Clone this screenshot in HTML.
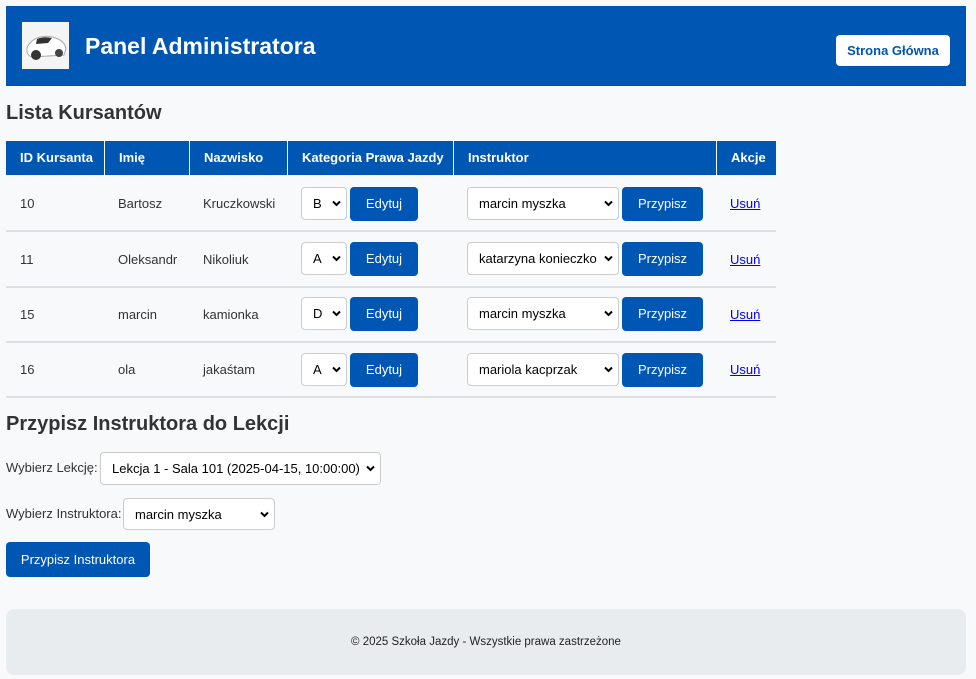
<!DOCTYPE html>
<html><head><meta charset="utf-8"><style>
*{box-sizing:border-box;margin:0;padding:0}
body{width:976px;height:679px;background:#f8f9fa;font-family:"Liberation Sans",Arial,sans-serif;color:#333;position:relative;overflow:hidden}
.a{position:absolute}
.hdr{left:6px;top:6px;width:960px;height:80px;background:#0056b3}
.logo{left:22px;top:22px;width:47px;height:47px;background:#f4f4f4}
.title{left:85px;top:32px;font-size:23px;font-weight:bold;color:#fff;line-height:28px}
.sg{left:836px;top:35px;width:114px;height:31px;background:#fff;border-radius:4px;color:#0056b3;font-weight:bold;font-size:13px;text-align:center;line-height:31px}
h2{position:absolute;font-size:20px;font-weight:bold;color:#333;line-height:24px}
.th{top:141px;height:34px;background:#0056b3;color:#fff;font-weight:bold;font-size:13px;line-height:34px;padding-left:14px}
.td{font-size:13px;line-height:16px}
.sep{height:2px;background:#dde0e3}
.sel{background:#fff;border:1px solid #ccc;border-radius:4px;font-size:13px;color:#000;padding-left:11px;height:33px;line-height:31px}
.sel svg{position:absolute;right:5px;top:12px}
.btn{background:#0056b3;color:#fff;border-radius:4px;font-size:13px;text-align:center;height:34px;line-height:34px}
.lnk{color:#0000ee;text-decoration:underline;font-size:13px}
.lbl{font-size:13px;color:#333}
.foot{left:6px;top:609px;width:960px;height:66px;background:#e9ecef;border-radius:8px;font-size:11.5px;text-align:center;line-height:66px;color:#222}
</style></head><body>
<div class="a hdr"></div>
<div class="a logo"><svg width="47" height="47" viewBox="0 0 47 47"><path d="M5 26 Q8 18 18 15 Q28 13 36 17 Q43 20 44 27 L42 33 L10 35 Q4 33 5 26Z" fill="#fff" stroke="#aaa"/><path d="M15 17 Q22 14 30 16 L26 21 L14 22Z" fill="#333"/><circle cx="14" cy="33" r="5" fill="#333"/><circle cx="37" cy="31" r="4" fill="#444"/></svg></div>
<div class="a title">Panel Administratora</div>
<div class="a sg">Strona Główna</div>

<h2 style="left:6px;top:101px">Lista Kursantów</h2>

<div class="a th" style="left:6px;width:98px">ID Kursanta</div>
<div class="a th" style="left:105px;width:84px">Imię</div>
<div class="a th" style="left:190px;width:97px">Nazwisko</div>
<div class="a th" style="left:288px;width:165px">Kategoria Prawa Jazdy</div>
<div class="a th" style="left:454px;width:262px">Instruktor</div>
<div class="a th" style="left:717px;width:59px">Akcje</div>

<div class="a td" style="left:20px;top:196px">10</div><div class="a td" style="left:118px;top:196px">Bartosz</div><div class="a td" style="left:203px;top:196px">Kruczkowski</div>
<div class="a sel" style="left:301px;top:187px;width:46px">B<svg width="9" height="7" viewBox="0 0 9 7"><path d="M1 1.5L4.5 5L8 1.5" stroke="#000" stroke-width="2" fill="none"/></svg></div>
<div class="a btn" style="left:350px;top:187px;width:68px">Edytuj</div>
<div class="a sel" style="left:467px;top:187px;width:152px">marcin myszka<svg width="9" height="7" viewBox="0 0 9 7"><path d="M1 1.5L4.5 5L8 1.5" stroke="#000" stroke-width="2" fill="none"/></svg></div>
<div class="a btn" style="left:622px;top:187px;width:81px">Przypisz</div>
<div class="a lnk" style="left:730px;top:196px">Usuń</div>
<div class="a sep" style="left:6px;top:230px;width:770px"></div>

<div class="a td" style="left:20px;top:252px">11</div><div class="a td" style="left:118px;top:252px">Oleksandr</div><div class="a td" style="left:203px;top:252px">Nikoliuk</div>
<div class="a sel" style="left:301px;top:242px;width:46px">A<svg width="9" height="7" viewBox="0 0 9 7"><path d="M1 1.5L4.5 5L8 1.5" stroke="#000" stroke-width="2" fill="none"/></svg></div>
<div class="a btn" style="left:350px;top:242px;width:68px">Edytuj</div>
<div class="a sel" style="left:467px;top:242px;width:152px">katarzyna konieczko<svg width="9" height="7" viewBox="0 0 9 7"><path d="M1 1.5L4.5 5L8 1.5" stroke="#000" stroke-width="2" fill="none"/></svg></div>
<div class="a btn" style="left:622px;top:242px;width:81px">Przypisz</div>
<div class="a lnk" style="left:730px;top:252px">Usuń</div>
<div class="a sep" style="left:6px;top:286px;width:770px"></div>

<div class="a td" style="left:20px;top:307px">15</div><div class="a td" style="left:118px;top:307px">marcin</div><div class="a td" style="left:203px;top:307px">kamionka</div>
<div class="a sel" style="left:301px;top:297px;width:46px">D<svg width="9" height="7" viewBox="0 0 9 7"><path d="M1 1.5L4.5 5L8 1.5" stroke="#000" stroke-width="2" fill="none"/></svg></div>
<div class="a btn" style="left:350px;top:297px;width:68px">Edytuj</div>
<div class="a sel" style="left:467px;top:297px;width:152px">marcin myszka<svg width="9" height="7" viewBox="0 0 9 7"><path d="M1 1.5L4.5 5L8 1.5" stroke="#000" stroke-width="2" fill="none"/></svg></div>
<div class="a btn" style="left:622px;top:297px;width:81px">Przypisz</div>
<div class="a lnk" style="left:730px;top:307px">Usuń</div>
<div class="a sep" style="left:6px;top:341px;width:770px"></div>

<div class="a td" style="left:20px;top:362px">16</div><div class="a td" style="left:118px;top:362px">ola</div><div class="a td" style="left:203px;top:362px">jakaśtam</div>
<div class="a sel" style="left:301px;top:353px;width:46px">A<svg width="9" height="7" viewBox="0 0 9 7"><path d="M1 1.5L4.5 5L8 1.5" stroke="#000" stroke-width="2" fill="none"/></svg></div>
<div class="a btn" style="left:350px;top:353px;width:68px">Edytuj</div>
<div class="a sel" style="left:467px;top:353px;width:152px">mariola kacprzak<svg width="9" height="7" viewBox="0 0 9 7"><path d="M1 1.5L4.5 5L8 1.5" stroke="#000" stroke-width="2" fill="none"/></svg></div>
<div class="a btn" style="left:622px;top:353px;width:81px">Przypisz</div>
<div class="a lnk" style="left:730px;top:362px">Usuń</div>
<div class="a sep" style="left:6px;top:396px;width:770px"></div>

<h2 style="left:6px;top:412px">Przypisz Instruktora do Lekcji</h2>
<div class="a lbl" style="left:6px;top:460px">Wybierz Lekcję:</div>
<div class="a sel" style="left:100px;top:452px;width:281px;height:33px">Lekcja 1 - Sala 101 (2025-04-15, 10:00:00)<svg width="9" height="7" viewBox="0 0 9 7"><path d="M1 1.5L4.5 5L8 1.5" stroke="#000" stroke-width="2" fill="none"/></svg></div>
<div class="a lbl" style="left:6px;top:506px">Wybierz Instruktora:</div>
<div class="a sel" style="left:123px;top:498px;width:152px;height:32px">marcin myszka<svg width="9" height="7" viewBox="0 0 9 7"><path d="M1 1.5L4.5 5L8 1.5" stroke="#000" stroke-width="2" fill="none"/></svg></div>
<div class="a btn" style="left:6px;top:542px;width:144px;height:35px;line-height:35px">Przypisz Instruktora</div>

<div class="a foot">© 2025 Szkoła Jazdy - Wszystkie prawa zastrzeżone</div>
</body></html>
